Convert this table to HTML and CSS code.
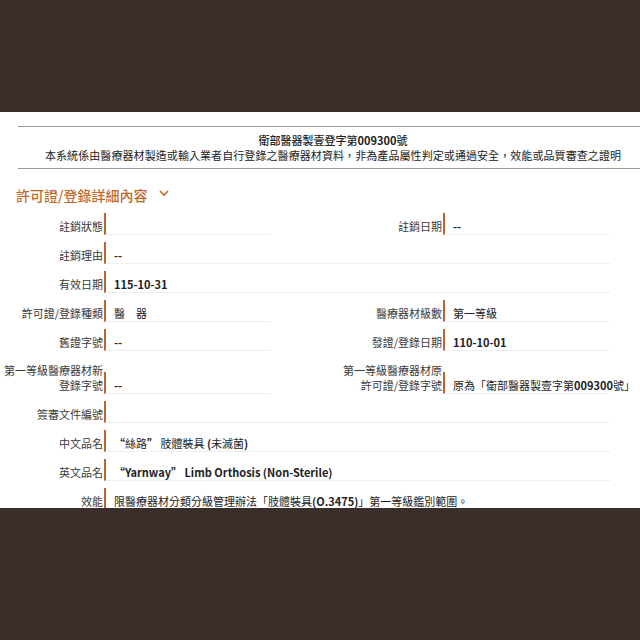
FILE: index.html
```html
<!DOCTYPE html>
<html lang="zh-Hant">
<head>
<meta charset="utf-8">
<link rel="stylesheet" href="styles.css">
</head>
<body>
<div class="sheet">
  <div class="notice">
    <div class="notice-title">衛部醫器製壹登字第<b>009300</b>號</div>
    <div class="notice-text">本系統係由醫療器材製造或輸入業者自行登錄之醫療器材資料，非為產品屬性判定或通過安全，效能或品質審查之證明</div>
  </div>
  <h2 class="section-title">許可證/登錄詳細內容
    <svg class="chev" width="10" height="7" viewBox="0 0 10 7"><polyline points="1,1 5,5 9,1" fill="none" stroke="#c0692b" stroke-width="1.6"/></svg>
  </h2>
  <div class="rows">
    <div class="row">
      <div class="label">註銷狀態</div><div class="field"></div>
      <div class="label label-r">註銷日期</div><div class="field"><b>--</b></div>
    </div>
    <div class="row">
      <div class="label">註銷理由</div><div class="field field-wide"><b>--</b></div>
    </div>
    <div class="row">
      <div class="label">有效日期</div><div class="field field-wide"><b>115-10-31</b></div>
    </div>
    <div class="row">
      <div class="label">許可證/登錄種類</div><div class="field">醫　器</div>
      <div class="label label-r">醫療器材級數</div><div class="field">第一等級</div>
    </div>
    <div class="row">
      <div class="label">舊證字號</div><div class="field"><b>--</b></div>
      <div class="label label-r">發證/登錄日期</div><div class="field"><b>110-10-01</b></div>
    </div>
    <div class="row row-tall">
      <div class="label">第一等級醫療器材新<br>登錄字號</div><div class="field"><b>--</b></div>
      <div class="label label-r">第一等級醫療器材原<br>許可證/登錄字號</div><div class="field">原為「衛部醫器製壹字第<b>009300</b>號」</div>
    </div>
    <div class="row">
      <div class="label">簽審文件編號</div><div class="field field-wide"></div>
    </div>
    <div class="row">
      <div class="label">中文品名</div><div class="field field-wide"><b>“</b>絲路<b>”</b> 肢體裝具 <b>(</b>未滅菌<b>)</b></div>
    </div>
    <div class="row">
      <div class="label">英文品名</div><div class="field field-wide"><b>“Yarnway” Limb Orthosis (Non-Sterile)</b></div>
    </div>
    <div class="row">
      <div class="label">效能</div><div class="field field-wide">限醫療器材分類分級管理辦法「肢體裝具<b>(O.3475)</b>」第一等級鑑別範圍。</div>
    </div>
  </div>
</div>
</body>
</html>
```

FILE: styles.css
```css
html, body {
  margin: 0;
  padding: 0;
  background: #3a2e2b;
  height: 640px;
  overflow: hidden;
}

.sheet {
  margin-top: 112px;
  height: 396px;
  background: #ffffff;
  overflow: hidden;
  font-family: "Noto Sans CJK TC", "Noto Sans", sans-serif;
  font-size: 11px;
  color: #2b2b2b;
}

.sheet b {
  font-weight: 700;
}

.notice {
  margin: 14px 0 0 18px;
  width: 630px;
  border-top: 1px solid #9a9a9a;
  border-bottom: 1px solid #9a9a9a;
  padding: 6px 0 5px;
  line-height: 15px;
  text-align: center;
  color: #222;
  white-space: nowrap;
}

.notice-title {
  font-weight: 500;
}

.notice-text {
  letter-spacing: 0.08px;
}

.section-title {
  margin: 16px 0 0 16px;
  height: 20px;
  line-height: 20px;
  font-size: 14px;
  font-weight: 500;
  color: #c0692b;
  display: flex;
  align-items: center;
}

.chev {
  margin-left: 12px;
  margin-top: -4px;
}

.rows {
  display: flex;
  flex-direction: column;
  margin-top: 1px;
}

.row {
  display: flex;
  align-items: flex-end;
  padding-top: 7px;
}

.row-tall {
  padding-top: 12px;
}

.label {
  width: 103px;
  padding-right: 1px;
  padding-bottom: 1px;
  text-align: right;
  line-height: 15px;
  color: #3a3a3a;
  white-space: nowrap;
  flex: none;
}

.label-r {
  width: 172px;
}

.field {
  width: 156px;
  height: 16px;
  padding: 5px 0 0 8px;
  line-height: 17px;
  border-left: 2px solid #bd6532;
  border-bottom: 1px solid #eeeeee;
  color: #222;
  flex: none;
  white-space: nowrap;
}

.field-wide {
  width: 496px;
}
```
